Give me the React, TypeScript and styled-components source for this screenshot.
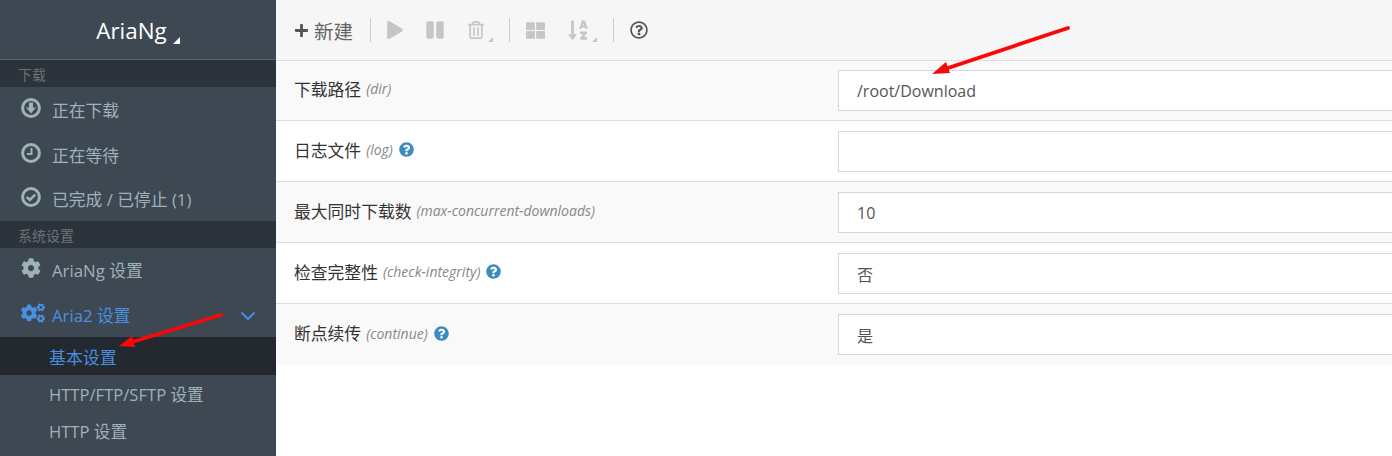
import * as React from 'react';
import styled, { createGlobalStyle } from 'styled-components';
import { ChevronDown } from 'lucide-react';
import {
  FaCog,
  FaCogs,
  FaPlus,
  FaPlay,
  FaPause,
  FaRegTrashAlt,
  FaThLarge,
  FaSortAlphaDown,
  FaRegQuestionCircle,
  FaQuestionCircle,
} from 'react-icons/fa';

const GlobalStyle = createGlobalStyle`
  html, body {
    margin: 0;
    height: 456px;
    overflow: hidden;
    background: #fff;
  }
  body {
    font-family: "Open Sans", "Noto Sans CJK SC", sans-serif;
  }
`;

const Page = styled.div`
  position: relative;
  display: flex;
  width: 1392px;
  height: 456px;
  overflow: hidden;
`;

const Sidebar = styled.aside`
  width: 276px;
  flex: none;
  background: #3d4852;
  color: #9db2bb;
`;

const Brand = styled.div`
  height: 60px;
  box-sizing: border-box;
  padding-top: 2px;
  display: flex;
  align-items: center;
  justify-content: center;
  border-bottom: 1px solid #58626b;
  color: #fff;
  font-size: 22.4px;
`;

const Corner = styled.span<{ $color?: string; $size?: number }>`
  display: inline-block;
  width: 0;
  height: 0;
  border-style: solid;
  border-width: 0 0 ${p => p.$size || 7}px ${p => p.$size || 7}px;
  border-color: transparent transparent ${p => p.$color || '#fff'} transparent;
  align-self: flex-end;
`;

const BrandCorner = styled(Corner)`
  margin: 0 0 15px 6px;
`;

const ToolCorner = styled(Corner)`
  margin: 0 0 1px 3px;
`;

const SectionHead = styled.div`
  height: 27px;
  line-height: 30px;
  background: #2d333b;
  color: #6c7279;
  font-size: 14px;
  padding-left: 18px;
`;

const TopGroup = styled.div`
  height: 134px;
  box-sizing: border-box;
  padding-top: 1px;
`;

const MenuItem = styled.div<{ $active?: boolean }>`
  height: 44.4px;
  display: flex;
  align-items: center;
  padding: 0 20px 0 21px;
  font-size: 16.8px;
  color: ${p => (p.$active ? '#4a90e2' : '#9db2bb')};
`;

const MenuIcon = styled.span`
  width: 31px;
  flex: none;
  display: flex;
  align-items: center;
  margin-top: -4px;
  color: #9fb2b8;

  svg {
    width: 20px;
    height: 20px;
  }
`;

const ActiveMenuIcon = styled(MenuIcon)`
  color: #4a90e2;

  svg {
    width: 24px;
    height: 22px;
  }
`;

const MenuChevron = styled.span`
  margin-left: auto;
  display: flex;
  margin-right: -4px;
  margin-top: 2px;
`;

const SubItem = styled.div<{ $active?: boolean }>`
  height: ${p => (p.$active ? '38px' : '37px')};
  line-height: ${p => (p.$active ? '41px' : '39px')};
  padding-left: 49px;
  font-size: ${p => (p.$active ? '16.9px' : '16.6px')};
  background: ${p => (p.$active ? '#23292e' : 'transparent')};
  color: ${p => (p.$active ? '#4a90e2' : '#9db2bb')};
`;

const Main = styled.main`
  flex: 1;
  min-width: 0;
`;

const Toolbar = styled.div`
  height: 60.5px;
  display: flex;
  align-items: center;
  background: #f6f6f6;
  border-bottom: 1px solid #dddddd;
  padding-left: 18px;
  box-sizing: border-box;
`;

const ToolButton = styled.span<{ $disabled?: boolean; $w: number; $pad?: number }>`
  display: flex;
  align-items: center;
  box-sizing: border-box;
  width: ${p => p.$w}px;
  padding-left: ${p => p.$pad || 0}px;
  height: 26px;
  margin-top: 1px;
  color: ${p => (p.$disabled ? '#c6c6c6' : '#555')};
  font-size: 19.5px;
  white-space: nowrap;
`;

const NewLabel = styled.span`
  margin-left: 5px;
  color: #666;
`;

const ToolDivider = styled.span`
  width: 1px;
  height: 24px;
  background: #c9c9c9;
  flex: none;
`;

const OptionRow = styled.div<{ $odd?: boolean }>`
  height: 60.95px;
  box-sizing: border-box;
  display: flex;
  align-items: center;
  background: ${p => (p.$odd ? '#f9f9f9' : '#fff')};
  border-bottom: 1px solid #dddddd;

  &:last-child {
    border-bottom: none;
  }
`;

const OptionLabel = styled.div`
  width: 562px;
  flex: none;
  padding-left: 18px;
  box-sizing: border-box;
  display: flex;
  align-items: center;
  color: #333;
  font-size: 16.8px;
  margin-top: -3px;
`;

const OptionKey = styled.em`
  color: #888;
  font-size: 14px;
  margin-left: 5px;
`;

const HelpIcon = styled(FaQuestionCircle)`
  color: #3c8dbc;
  width: 15px;
  height: 15px;
  margin-left: 6px;
`;

const OptionInput = styled.input`
  display: block;
  width: 700px;
  height: 41px;
  flex: none;
  box-sizing: border-box;
  border: 1px solid #d2d6de;
  background: #fff;
  padding: 1px 18px 0;
  color: #555;
  font-family: inherit;
  font-size: 16px;
  outline: none;
`;

const Annotations = styled.svg`
  position: absolute;
  left: 0;
  top: 0;
  width: 1392px;
  height: 456px;
  pointer-events: none;
`;

const ArrowLine = styled.line`
  stroke: #f80808;
  stroke-width: 3.8;
  stroke-linecap: round;
`;

const ArrowHead = styled.polygon`
  fill: #f80808;
`;

// font-awesome 4 style outlines, the packaged regular ones are too thin
function DownloadIcon() {
  return (
    <svg viewBox="0 0 20 20">
      <circle cx="10" cy="10" r="8.4" fill="none" stroke="currentColor" strokeWidth="3" />
      <path d="M8 4.5h4v5h3L10 15.5 5 9.5h3z" fill="currentColor" />
    </svg>
  );
}

function ClockIcon() {
  return (
    <svg viewBox="0 0 20 20">
      <circle cx="10" cy="10" r="8.4" fill="none" stroke="currentColor" strokeWidth="3" />
      <path d="M10.5 5v6H6" fill="none" stroke="currentColor" strokeWidth="2" />
    </svg>
  );
}

function CheckIcon() {
  return (
    <svg viewBox="0 0 20 20">
      <circle cx="10" cy="10" r="8.4" fill="none" stroke="currentColor" strokeWidth="3" />
      <path d="M5.8 10l3 3 5.4-5.4" fill="none" stroke="currentColor" strokeWidth="2.6" />
    </svg>
  );
}

const options = [
  { label: '下载路径', key: 'dir', value: '/root/Download' },
  { label: '日志文件', key: 'log', value: '', help: true },
  { label: '最大同时下载数', key: 'max-concurrent-downloads', value: '10' },
  { label: '检查完整性', key: 'check-integrity', value: '否', help: true },
  { label: '断点续传', key: 'continue', value: '是', help: true },
];

export default function App() {
  return (
    <Page>
      <GlobalStyle />
      <Sidebar>
        <Brand>
          AriaNg
          <BrandCorner />
        </Brand>
        <SectionHead>下载</SectionHead>
        <TopGroup>
          <MenuItem>
            <MenuIcon><DownloadIcon /></MenuIcon>
            正在下载
          </MenuItem>
          <MenuItem>
            <MenuIcon><ClockIcon /></MenuIcon>
            正在等待
          </MenuItem>
          <MenuItem>
            <MenuIcon><CheckIcon /></MenuIcon>
            已完成 / 已停止 (1)
          </MenuItem>
        </TopGroup>
        <SectionHead>系统设置</SectionHead>
        <MenuItem>
          <MenuIcon><FaCog /></MenuIcon>
          AriaNg 设置
        </MenuItem>
        <MenuItem $active>
          <ActiveMenuIcon><FaCogs /></ActiveMenuIcon>
          Aria2 设置
          <MenuChevron><ChevronDown size={24} strokeWidth={1.8} /></MenuChevron>
        </MenuItem>
        <SubItem $active>基本设置</SubItem>
        <SubItem>HTTP/FTP/SFTP 设置</SubItem>
        <SubItem>HTTP 设置</SubItem>
      </Sidebar>
      <Main>
        <Toolbar>
          <ToolButton $w={76}>
            <FaPlus size={15} />
            <NewLabel>新建</NewLabel>
          </ToolButton>
          <ToolDivider />
          <ToolButton $disabled $w={54} $pad={15}><FaPlay size={18} /></ToolButton>
          <ToolButton $disabled $w={42}><FaPause size={20} /></ToolButton>
          <ToolButton $disabled $w={42}>
            <FaRegTrashAlt size={18} />
            <ToolCorner $color="#c6c6c6" $size={5} />
          </ToolButton>
          <ToolDivider />
          <ToolButton $disabled $w={57} $pad={16}>
            <FaThLarge size={19} />
          </ToolButton>
          <ToolButton $disabled $w={46}>
            <FaSortAlphaDown size={22} />
            <ToolCorner $color="#c6c6c6" $size={5} />
          </ToolButton>
          <ToolDivider />
          <ToolButton $w={50} $pad={16}><FaRegQuestionCircle size={18} /></ToolButton>
        </Toolbar>
        {options.map((o, i) => (
          <OptionRow key={o.key} $odd={i % 2 === 0}>
            <OptionLabel>
              {o.label}
              <OptionKey>({o.key})</OptionKey>
              {o.help && <HelpIcon />}
            </OptionLabel>
            <OptionInput readOnly value={o.value} />
          </OptionRow>
        ))}
      </Main>
      <Annotations viewBox="0 0 1392 456">
        <ArrowLine x1="1068" y1="28" x2="945" y2="69" />
        <ArrowHead points="932,74 946,62 950,73" />
        <ArrowLine x1="221" y1="315" x2="132" y2="342" />
        <ArrowHead points="119,346 132,336 135,347" />
      </Annotations>
    </Page>
  );
}
